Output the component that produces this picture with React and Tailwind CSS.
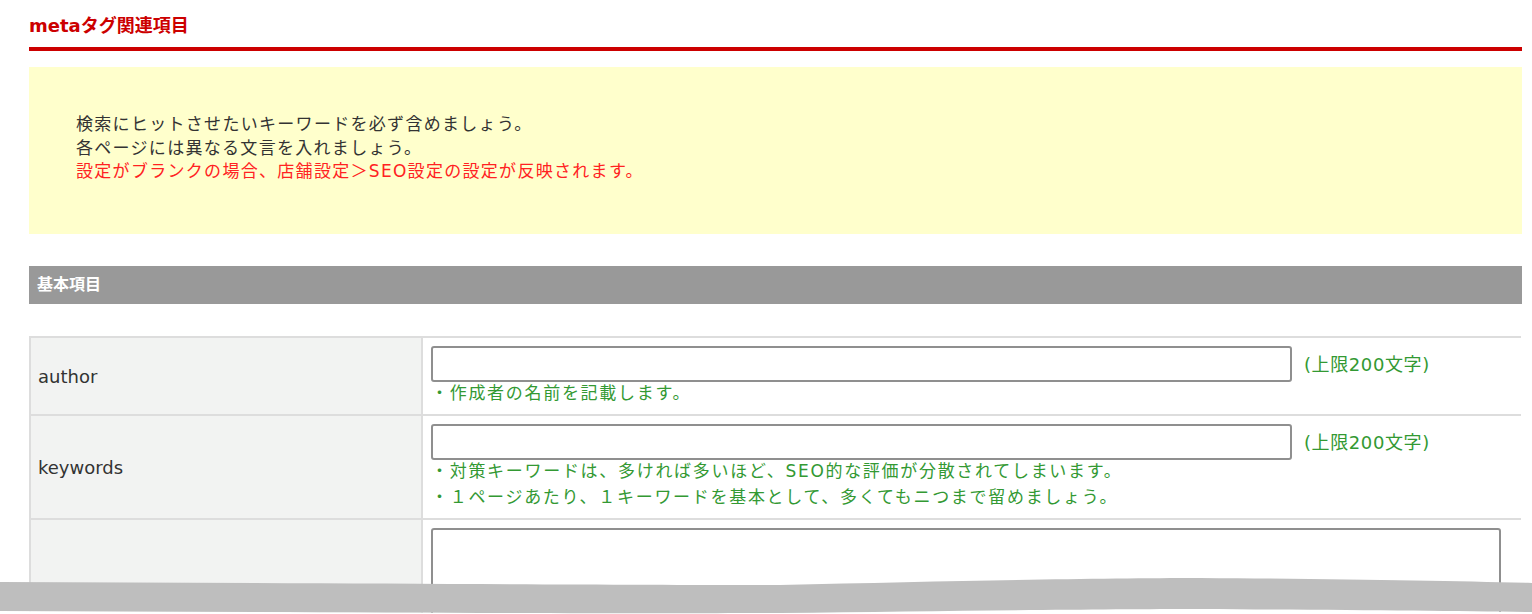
import React from 'react';

const font = { fontFamily: '"DejaVu Sans", "Noto Sans CJK JP", sans-serif' };

function Row({ label, children, last }) {
  return (
    <div className={`flex ${last ? '' : 'border-b-2 border-[#dddddd]'}`}>
      <div className="w-[394px] shrink-0 bg-[#f2f3f2] border-l-2 border-r-2 border-[#dddddd] pl-[7px] flex items-center text-[18px] text-[#333333]">
        {label}
      </div>
      <div className="flex-1 pl-[8px] pt-[8px] pb-[8px]">{children}</div>
    </div>
  );
}

function Help({ lines }) {
  return (
    <div className="-mt-[2px] text-[17px] leading-[26px] tracking-[1.7px] text-[#339933]">
      {lines.map((l, i) => <div key={i}>{l}</div>)}
    </div>
  );
}

function LimitInput() {
  return (
    <div className="flex items-center">
      <input type="text" className="w-[861px] h-[36px] border-2 border-[#8f8f8f] rounded-[3px] bg-white outline-none" />
      <span className="ml-[12px] text-[18px] tracking-[0.6px] text-[#339933]">(上限200文字)</span>
    </div>
  );
}

export default function App() {
  return (
    <div style={font} className="relative h-[614px] w-[1532px] overflow-hidden bg-white">
      <div className="ml-[29px] w-[1493px]">
        <div className="h-[51px] border-b-4 border-[#cc0000] pt-[12px]">
          <h1 className="text-[18px] leading-[28px] font-bold text-[#cc0000]">metaタグ関連項目</h1>
        </div>

        <div className="mt-[16px] h-[167px] bg-[#ffffcc] pl-[47px] pt-[46px] text-[17px] leading-[23.5px] tracking-[1.3px] text-[#333333]">
          <p>検索にヒットさせたいキーワードを必ず含めましょう。</p>
          <p>各ページには異なる文言を入れましょう。</p>
          <p className="text-[#ff2222]">設定がブランクの場合、店舗設定＞SEO設定の設定が反映されます。</p>
        </div>

        <div className="mt-[32px] h-[38px] bg-[#999999] pl-[8px] flex items-center text-[16px] font-bold text-white">
          基本項目
        </div>

        <div className="mt-[32px] w-[1492px] border-t-2 border-[#dddddd]">
          <Row label="author">
            <LimitInput />
            <Help lines={['・作成者の名前を記載します。']} />
          </Row>
          <Row label="keywords">
            <LimitInput />
            <Help lines={[
              '・対策キーワードは、多ければ多いほど、SEO的な評価が分散されてしまいます。',
              '・１ページあたり、１キーワードを基本として、多くてもニつまで留めましょう。',
            ]} />
          </Row>
          <Row label="" last>
            <textarea className="block w-[1070px] h-[120px] border-2 border-[#8f8f8f] rounded-[3px] bg-white outline-none resize-none" />
          </Row>
        </div>
      </div>

      {/* torn screenshot edge */}
      <svg className="absolute left-0 top-[570px]" width="1532" height="44" viewBox="0 0 1532 44">
        <path d="M0 44 L0 41 C300 42 600 44 780 43 C950 41 1100 39 1200 39 C1350 40 1450 41 1532 42 L1532 44 Z" fill="#ffffff" />
        <path d="M0 12 C300 13 600 15 780 15 C950 11 1100 8 1200 8 C1350 9 1450 11 1532 13 L1532 42 C1450 41 1350 40 1200 39 C1100 39 950 41 780 43 C600 44 300 42 0 41 Z" fill="#bebebe" />
      </svg>
    </div>
  );
}
